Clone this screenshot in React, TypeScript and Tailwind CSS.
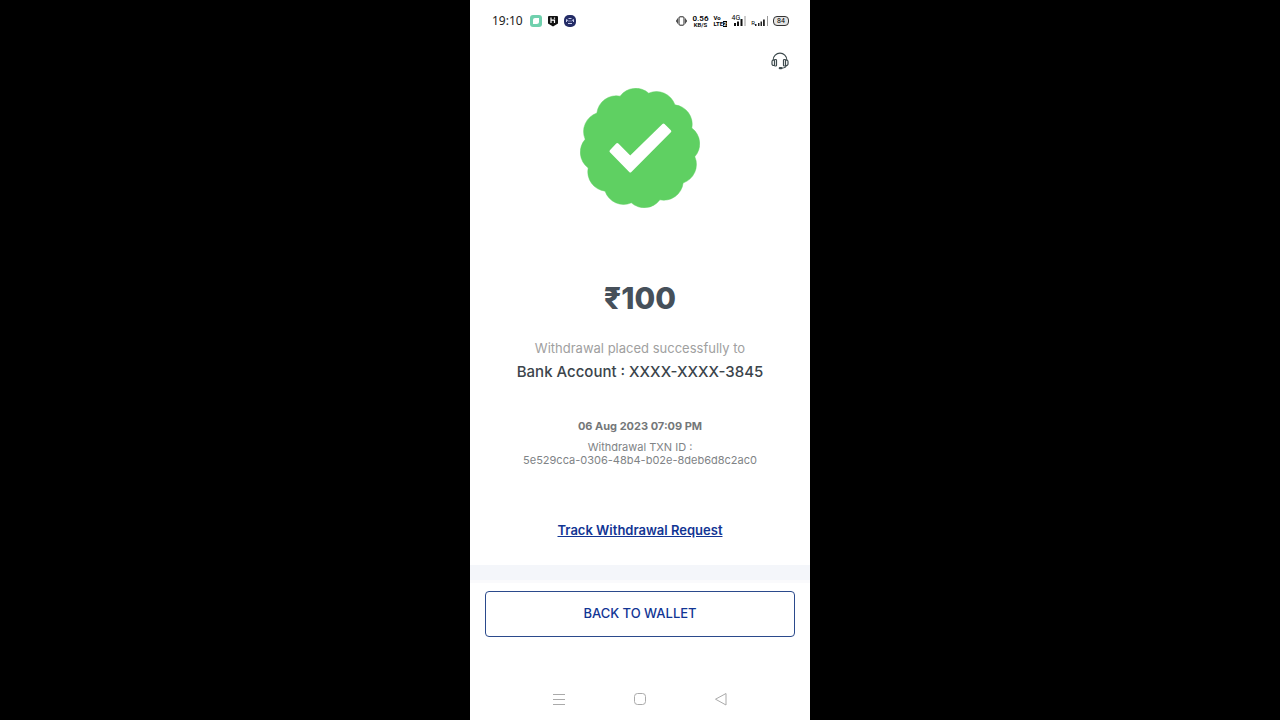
function StatusBar() {
  return (
    <header className="flex h-10 items-center justify-between pl-[22px] pr-[21px] pt-px text-black">
      <div className="flex items-center gap-[7px]">
        <time className="font-['Noto_Sans'] text-xs text-[#222]">19:10</time>
        <div className="flex items-center gap-[5px]">
          <svg viewBox="0 0 12 12" className="h-3 w-3">
            <rect width="12" height="12" rx="3" fill="#6fd0ad" />
            <path d="M5 3h4v3.500a2.500 2.500 0 0 1-2.500 2.500H3V5a2 2 0 0 1 2-2z" fill="#fff" />
          </svg>
          <svg viewBox="0 0 12 12" className="h-3 w-3">
            <path d="M2 1h8a1 1 0 0 1 1 1v6.500L6 11.500 1 8.500V2a1 1 0 0 1 1-1z" fill="#111" />
            <path d="M4 2.500v5.500M4 5.200h3.500V8M7.500 2.500v1.200" fill="none" stroke="#fff" strokeWidth="1.200" />
          </svg>
          <svg viewBox="0 0 12 12" className="h-3 w-3">
            <rect width="12" height="12" rx="5" fill="#242c66" />
            <path d="M2.500 4.500V7M2.500 4.500l2 1.500M9.500 4.500V7M9.500 4.500l-2 1.500M4.500 3.500h3M4 8.500h4M5.500 6h1" fill="none" stroke="#c9cdec" strokeWidth="1" />
          </svg>
        </div>
      </div>

      <div className="flex items-center gap-[5px]">
        <svg viewBox="0 0 11 10" className="h-2.5 w-[11px]" fill="none" stroke="#222">
          <rect x="3" y=".8" width="5" height="8.400" rx="1" />
          <path d="M1.500 2.500v5M9.500 2.500v5M.4 3.800v2.400M10.600 3.800v2.400" strokeWidth=".8" />
        </svg>
        <div className="flex flex-col items-center font-['Roboto'] font-semibold">
          <span className="text-[8px] leading-[7px]">0.56</span>
          <span className="text-[6px] leading-[5px]">KB/S</span>
        </div>
        <div className="flex flex-col font-['Roboto'] font-bold">
          <span className="text-[6px] leading-[6px]">Vo</span>
          <span className="flex text-[6px] leading-[6px]">
            LTE<span className="bg-black text-white">2</span>
          </span>
        </div>
        <div className="flex items-end">
          <span className="self-start font-['Roboto'] text-[7px] leading-[7px]">4G</span>
          <svg viewBox="0 0 10 11" className="-ml-1.5 h-[11px] w-2.5">
            <path d="M0 8h2v3H0zM3 6.500h2V11H3zM6.500 4h2v7h-2z" fill="#111" />
          </svg>
          <svg viewBox="0 0 2 11" className="h-[11px] w-0.5">
            <path d="M1 1v10" stroke="#999" />
          </svg>
        </div>
        <div className="flex items-end">
          <span className="font-['Roboto'] text-[6px] leading-[6px]">R</span>
          <svg viewBox="0 0 13 11" className="h-[11px] w-[13px]">
            <path d="M0 9h1.500v2H0zM3 8h1.500v3H3zM5.500 6.500H7V11H5.500zM8 4.500h1.800V11H8z" fill="#222" />
            <path d="M12.500 1v10" stroke="#999" />
          </svg>
        </div>
        <span className="flex h-2.5 w-4 items-center justify-center rounded border border-[#333] bg-[#e4e4e4] pt-px font-['Roboto'] text-[7px] leading-none">
          84
        </span>
      </div>
    </header>
  )
}

// scalloped edge: 12 arcs between points on a circle
function badgePath() {
  const points = Array.from({ length: 12 }, (_, i) => {
    const angle = ((i * 30 - 81) * Math.PI) / 180
    return [60 + 55.5 * Math.cos(angle), 60 + 55.5 * Math.sin(angle)]
  })
  const [first, ...rest] = points
  const arcs = [...rest, first].map(([x, y]) => `A19.500 19.500 0 0 1 ${x} ${y}`).join(' ')
  return `M${first[0]} ${first[1]} ${arcs}Z`
}

function SuccessBadge() {
  return (
    <svg viewBox="0 0 120 120" className="h-[120px] w-[120px]" role="img" aria-label="Success">
      <path d={badgePath()} fill="#5fd062" stroke="#5fd062" strokeWidth=".5" strokeLinejoin="round" />
      <path
        d="M31 63.300l6.300-6.800 12.900 13L83.500 37l6.300 6.200L50.300 83z"
        fill="#fff"
        stroke="#fff"
        strokeWidth="3"
        strokeLinejoin="round"
      />
    </svg>
  )
}

function SupportIcon() {
  return (
    <svg viewBox="0 0 18 18" className="h-[18px] w-[18px]" fill="none" stroke="#3d4a4d" strokeWidth="1.200">
      <path d="M2.200 8.500V8a6.800 6.800 0 0 1 13.600 0v.5" />
      <path d="M3.800 8H2.600a1.600 1.600 0 0 0-1.600 1.600v2.300a1.600 1.600 0 0 0 1.600 1.600h1.200" />
      <rect x="3.500" y="7.500" width="2" height="6.500" rx=".8" />
      <path d="M14.200 8h1.200a1.600 1.600 0 0 1 1.600 1.600v2.300a1.600 1.600 0 0 1-1.600 1.600h-1.200" />
      <rect x="12.500" y="7.500" width="2" height="6.500" rx=".8" />
      <path d="M15.300 13.500c-.3 1.800-2 2.500-4.500 2.600" />
      <path d="M8.800 16.200h1.500" strokeWidth="2.200" strokeLinecap="round" />
    </svg>
  )
}

function NavBar() {
  return (
    <nav className="mt-auto flex h-[42px] items-center justify-center gap-[67px] text-[#aaa]">
      <button type="button" aria-label="Recent apps">
        <svg viewBox="0 0 14 14" className="h-3.5 w-3.5" fill="none" stroke="currentColor">
          <path d="M1 2.500h12M1 7.500h12M1 12.500h12" />
        </svg>
      </button>
      <button type="button" aria-label="Home">
        <svg viewBox="0 0 14 14" className="h-3.5 w-3.5" fill="none" stroke="currentColor">
          <rect x="1.500" y="1.500" width="11" height="11" rx="3" />
        </svg>
      </button>
      <button type="button" aria-label="Back">
        <svg viewBox="0 0 14 14" className="h-3.5 w-3.5" fill="none" stroke="currentColor" strokeLinejoin="round">
          <path d="M12 1.500v11.500L1.500 7.200z" />
        </svg>
      </button>
    </nav>
  )
}

export default function App() {
  return (
    <div className="flex min-h-screen justify-center bg-black">
      <div className="flex w-full max-w-[340px] flex-col bg-white font-['Inter',sans-serif]">
        <StatusBar />

        <main className="flex flex-col items-center text-center">
          <button type="button" aria-label="Support" className="mr-[21px] mt-3 self-end">
            <SupportIcon />
          </button>

          <div className="mt-[18px]">
            <SuccessBadge />
          </div>

          <h1 className="mt-[70px] text-[30px] font-extrabold leading-10 text-[#46505a]">₹100</h1>

          <p className="mt-5 text-[13px] leading-5 text-[#a0a0a0]">Withdrawal placed successfully to</p>
          <p className="mt-1 text-[15px] font-medium leading-5 text-[#3b444b]">Bank Account : XXXX-XXXX-3845</p>

          <p className="mt-9 text-[11px] font-bold leading-4 text-[#747779]">06 Aug 2023 07:09 PM</p>
          <p className="mt-[7px] text-[11px] leading-[13px] text-[#808386]">
            Withdrawal TXN ID :<br />
            5e529cca-0306-48b4-b02e-8deb6d8c2ac0
          </p>

          <a href="#track" className="mt-[53px] text-[13px] font-semibold leading-5 text-[#123594] underline">
            Track Withdrawal Request
          </a>
        </main>

        <footer className="mt-[25px]">
          <div className="h-[18px] border-b-[3px] border-[#fafafc] bg-[#f4f6fa]" />
          <div className="px-[15px] pt-2">
            <button
              type="button"
              className="h-[46px] w-full rounded border border-[#2b4a8c] text-[13px] font-medium text-[#123594]"
            >
              BACK TO WALLET
            </button>
          </div>
        </footer>

        <NavBar />
      </div>
    </div>
  )
}
